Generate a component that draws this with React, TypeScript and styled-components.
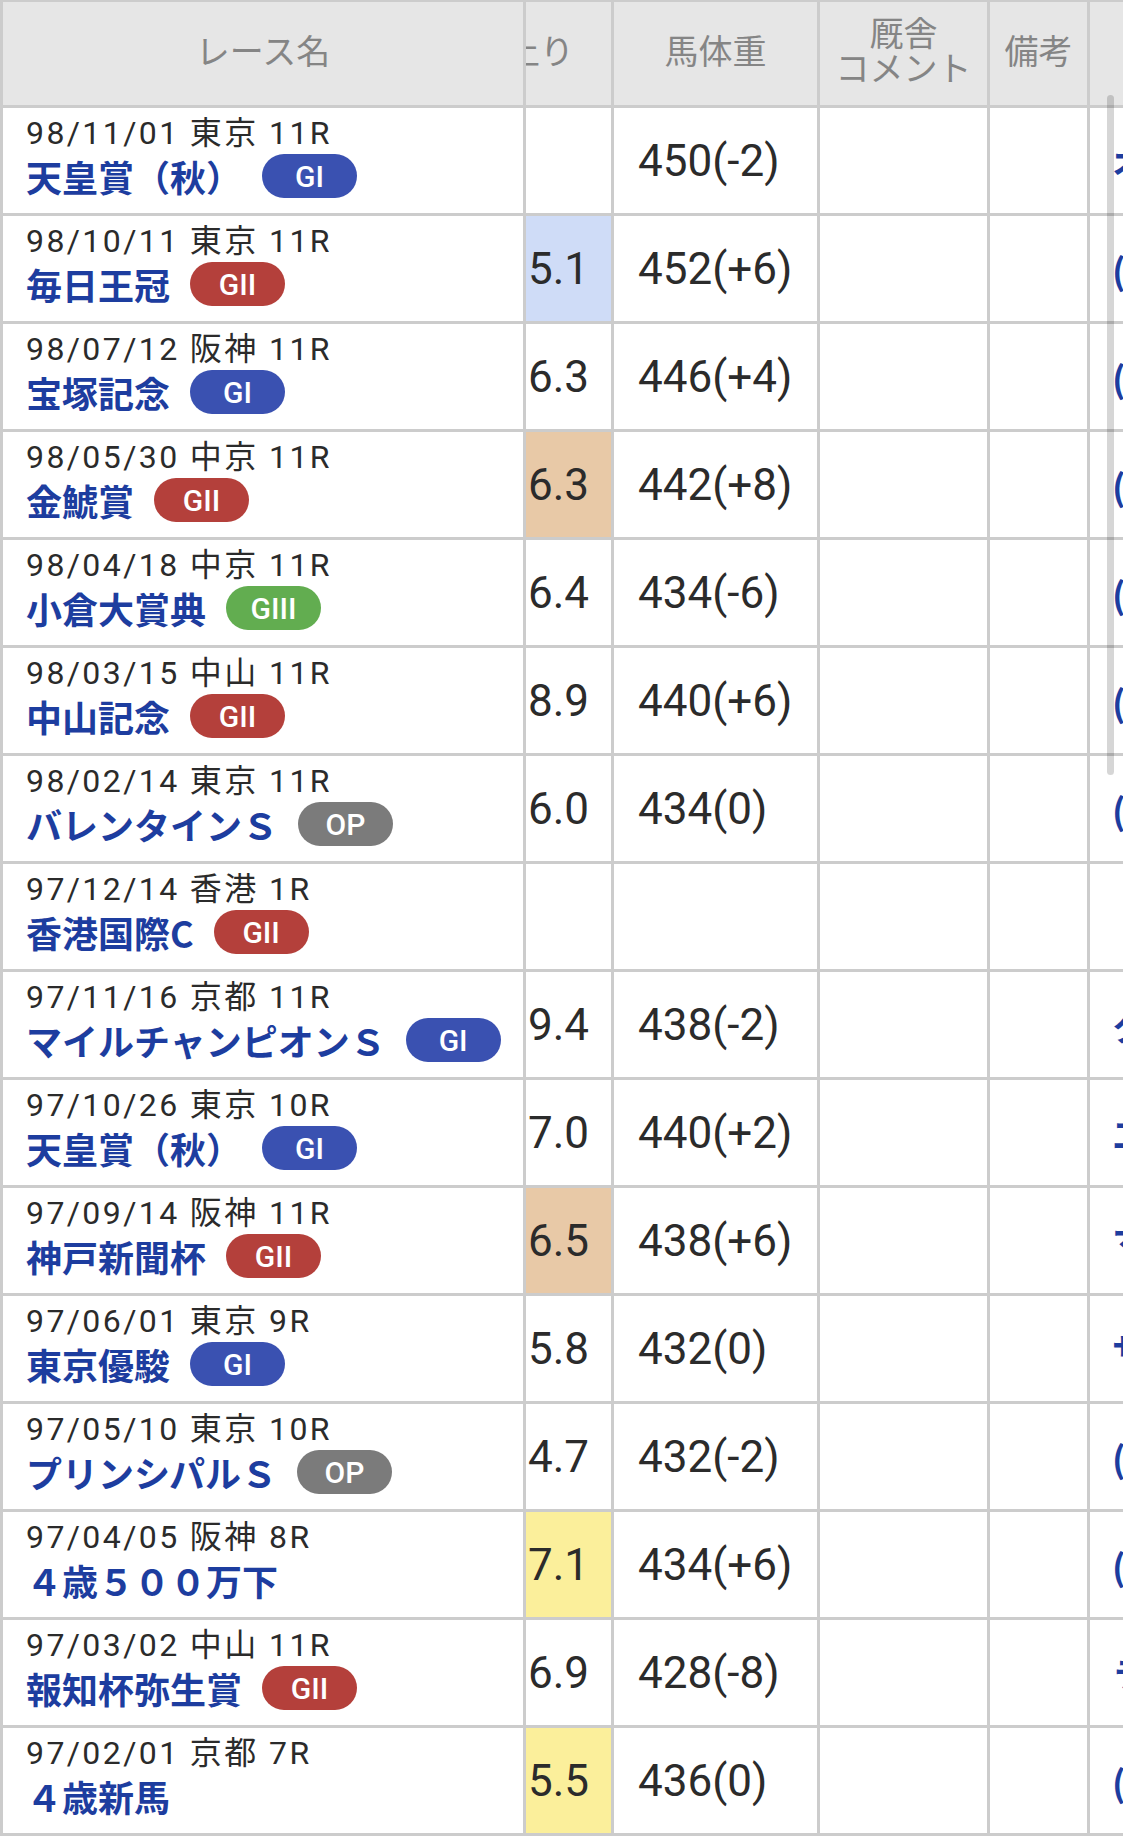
import styled, { createGlobalStyle } from "styled-components";

const GlobalStyle = createGlobalStyle`
  html, body {
    margin: 0;
    padding: 0;
    background: #ffffff;
  }
  body {
    font-family: Roboto, "Noto Sans CJK JP", sans-serif;
  }
`;

type Grade = "GI" | "GII" | "GIII" | "OP";

type Race = {
  date: string;
  place: string;
  round: string;
  name: string;
  grade?: Grade;
  agari: string;
  rank: number; // 上り順位 1-3, 0 = none
  weight: string;
  winner: string;
};

const races: Race[] = [
  { date: "98/11/01", place: "東京", round: "11R", name: "天皇賞（秋）", grade: "GI", agari: "", rank: 0, weight: "450(-2)", winner: "オフサイドトラップ" },
  { date: "98/10/11", place: "東京", round: "11R", name: "毎日王冠", grade: "GII", agari: "5.1", rank: 2, weight: "452(+6)", winner: "(エルコンドルパサー)" },
  { date: "98/07/12", place: "阪神", round: "11R", name: "宝塚記念", grade: "GI", agari: "6.3", rank: 0, weight: "446(+4)", winner: "(ステイゴールド)" },
  { date: "98/05/30", place: "中京", round: "11R", name: "金鯱賞", grade: "GII", agari: "6.3", rank: 3, weight: "442(+8)", winner: "(ミッドナイトベット)" },
  { date: "98/04/18", place: "中京", round: "11R", name: "小倉大賞典", grade: "GIII", agari: "6.4", rank: 0, weight: "434(-6)", winner: "(ツルマルガイセン)" },
  { date: "98/03/15", place: "中山", round: "11R", name: "中山記念", grade: "GII", agari: "8.9", rank: 0, weight: "440(+6)", winner: "(ローゼンカバリー)" },
  { date: "98/02/14", place: "東京", round: "11R", name: "バレンタインＳ", grade: "OP", agari: "6.0", rank: 0, weight: "434(0)", winner: "(ツクバシンフォニー)" },
  { date: "97/12/14", place: "香港", round: "1R", name: "香港国際C", grade: "GII", agari: "", rank: 0, weight: "", winner: "" },
  { date: "97/11/16", place: "京都", round: "11R", name: "マイルチャンピオンＳ", grade: "GI", agari: "9.4", rank: 0, weight: "438(-2)", winner: "タイキシャトル" },
  { date: "97/10/26", place: "東京", round: "10R", name: "天皇賞（秋）", grade: "GI", agari: "7.0", rank: 0, weight: "440(+2)", winner: "エアグルーヴ" },
  { date: "97/09/14", place: "阪神", round: "11R", name: "神戸新聞杯", grade: "GII", agari: "6.5", rank: 3, weight: "438(+6)", winner: "マチカネフクキタル" },
  { date: "97/06/01", place: "東京", round: "9R", name: "東京優駿", grade: "GI", agari: "5.8", rank: 0, weight: "432(0)", winner: "サニーブライアン" },
  { date: "97/05/10", place: "東京", round: "10R", name: "プリンシパルＳ", grade: "OP", agari: "4.7", rank: 0, weight: "432(-2)", winner: "(ランフォザドリーム)" },
  { date: "97/04/05", place: "阪神", round: "8R", name: "４歳５００万下", agari: "7.1", rank: 1, weight: "434(+6)", winner: "(マイネルシュバリエ)" },
  { date: "97/03/02", place: "中山", round: "11R", name: "報知杯弥生賞", grade: "GII", agari: "6.9", rank: 0, weight: "428(-8)", winner: "ランニングゲイル" },
  { date: "97/02/01", place: "京都", round: "7R", name: "４歳新馬", agari: "5.5", rank: 1, weight: "436(0)", winner: "(ミラクルスマイル)" },
];

const gradeColors: Record<Grade, string> = {
  GI: "#3a51b1",
  GII: "#b4403b",
  GIII: "#62ad50",
  OP: "#7b7b7b",
};

const rankColors = ["#ffffff", "#fbef9b", "#cfdcf7", "#e8c9a7"];

const Viewport = styled.div`
  position: relative;
  width: 1123px;
  height: 1837px;
  overflow: hidden;
  background: #ffffff;
`;

const Grid = styled.div`
  display: grid;
  grid-template-columns: 520px 85px 203px 167px 97px 400px;
  grid-template-rows: 103px;
  grid-auto-rows: 105px;
  gap: 3px;
  padding: 2px 0 3px 3px;
  background: #cccccc;
  width: max-content;
`;

const HeadCell = styled.div<{ $clip?: boolean }>`
  background: #e6e6e6;
  display: flex;
  align-items: center;
  justify-content: ${(p) => (p.$clip ? "flex-start" : "center")};
  overflow: hidden;
  padding-bottom: 9px;
  color: #858585;
  font-family: "Noto Sans CJK JP", sans-serif;
  font-size: 34px;
  font-weight: 400;
  line-height: 35px;
  text-align: center;
  white-space: nowrap;
`;

const HeadShift = styled.span`
  margin-left: -20px;
`;

const RaceCell = styled.div`
  background: #ffffff;
  display: flex;
  flex-direction: column;
  padding: 5px 0 0 23px;
`;

const DateLine = styled.div`
  height: 40px;
  line-height: 40px;
  font-family: Roboto, "Noto Sans CJK JP", sans-serif;
  font-size: 32px;
  letter-spacing: 2.4px;
  color: #2b2b2b;
  white-space: nowrap;
`;

const NameLine = styled.div`
  display: flex;
  align-items: center;
  gap: 20px;
  height: 48px;
  margin-top: -1px;
`;

const RaceName = styled.span`
  color: #1d3d9f;
  font-family: "Noto Sans CJK JP", sans-serif;
  font-size: 36px;
  font-weight: 700;
  white-space: nowrap;
`;

const Badge = styled.span<{ $color: string }>`
  display: inline-flex;
  align-items: center;
  justify-content: center;
  width: 95px;
  height: 44px;
  border-radius: 22px;
  background: ${(p) => p.$color};
  color: #ffffff;
  font-family: Roboto, sans-serif;
  font-size: 30px;
  font-weight: 500;
`;

const ValueCell = styled.div<{ $bg?: string; $pad: number }>`
  background: ${(p) => p.$bg || "#ffffff"};
  display: flex;
  align-items: center;
  overflow: hidden;
  padding-left: ${(p) => p.$pad}px;
  color: #2b2b2b;
  font-family: Roboto, sans-serif;
  font-size: 44px;
  white-space: nowrap;
`;

const EmptyCell = styled.div`
  background: #ffffff;
`;

const WinnerCell = styled.div`
  background: #ffffff;
  display: flex;
  align-items: center;
  padding-left: 22px;
  color: #1d3d9f;
  font-family: "Noto Sans CJK JP", sans-serif;
  font-size: 36px;
  font-weight: 700;
  white-space: nowrap;
`;

const ScrollThumb = styled.div`
  position: absolute;
  left: 1107px;
  top: 95px;
  width: 7px;
  height: 680px;
  border-radius: 4px;
  background: rgba(0, 0, 0, 0.16);
`;

const RaceRow = ({ race }: { race: Race }) => {
  return (
    <>
      <RaceCell>
        <DateLine>
          {race.date} {race.place} {race.round}
        </DateLine>
        <NameLine>
          <RaceName>{race.name}</RaceName>
          {race.grade && <Badge $color={gradeColors[race.grade]}>{race.grade}</Badge>}
        </NameLine>
      </RaceCell>
      <ValueCell $pad={2} $bg={rankColors[race.rank]}>
        {race.agari}
      </ValueCell>
      <ValueCell $pad={24}>{race.weight}</ValueCell>
      <EmptyCell />
      <EmptyCell />
      <WinnerCell>{race.winner}</WinnerCell>
    </>
  );
};

const App = () => {
  return (
    <>
      <GlobalStyle />
      <Viewport>
        <Grid>
          <HeadCell>レース名</HeadCell>
          <HeadCell $clip>
            <HeadShift>上り</HeadShift>
          </HeadCell>
          <HeadCell>馬体重</HeadCell>
          <HeadCell>
            厩舎
            <br />
            コメント
          </HeadCell>
          <HeadCell>備考</HeadCell>
          <HeadCell />
          {races.map((race, i) => (
            <RaceRow key={i} race={race} />
          ))}
        </Grid>
        <ScrollThumb />
      </Viewport>
    </>
  );
};

export default App;
